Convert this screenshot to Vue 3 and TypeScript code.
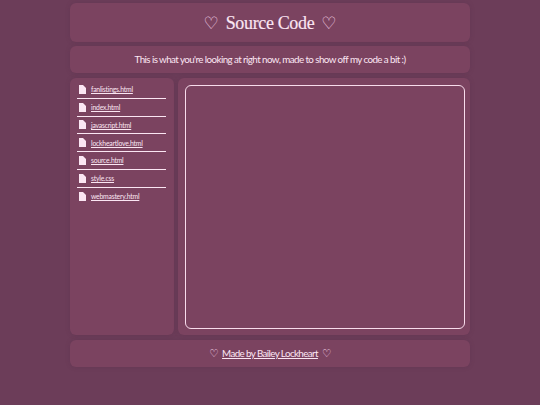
<script setup lang="ts">
const files: string[] = [
  'fanlistings.html',
  'index.html',
  'javascript.html',
  'lockheartlove.html',
  'source.html',
  'style.css',
  'webmastery.html',
]
</script>

<template>
  <div class="page">
    <header class="panel head">
      <span class="heart big">♡</span>
      <h1>Source Code</h1>
      <span class="heart big">♡</span>
    </header>
    <p class="panel sub">This is what you're looking at right now, made to show off my code a bit :)</p>
    <div class="cols">
      <aside class="panel side">
        <ul>
          <li v-for="f in files" :key="f">
            <svg width="7" height="9" viewBox="0 0 7 9"><path d="M0 0H4L7 3V9H0Z" fill="#fbe6f3" /></svg>
            <a href="#">{{ f }}</a>
          </li>
        </ul>
      </aside>
      <main class="panel content">
        <div class="code"></div>
      </main>
    </div>
    <footer class="panel foot">
      <span class="heart">♡</span>
      <a href="#">Made by Bailey Lockheart</a>
      <span class="heart">♡</span>
    </footer>
  </div>
</template>

<style>
html, body { margin: 0; background: #6c3d59; }
</style>

<style scoped>
.page {
  width: 400px;
  height: 405px;
  margin: 0 auto;
  padding-top: 3px;
  box-sizing: border-box;
  display: flex;
  flex-direction: column;
  gap: 4px;
  color: #fbe6f3;
  font-family: Lato, sans-serif;
}
.panel {
  background: #7b4360;
  border-radius: 6px;
  box-shadow: 0 0 4px rgba(90, 45, 75, 0.35);
}
.head {
  height: 39px;
  box-sizing: border-box;
  padding-top: 1px;
  display: flex;
  align-items: center;
  justify-content: center;
  gap: 7px;
}
h1 {
  margin: 0;
  font: 400 18px "Liberation Serif", serif;
  letter-spacing: -0.35px;
  -webkit-text-stroke: 0.15px #fbe6f3;
}
.heart {
  font-family: "DejaVu Sans", sans-serif;
  font-size: 10.5px;
  color: #f3d3e6;
}
.big { font-size: 17px; }
.sub {
  margin: 0;
  height: 27px;
  line-height: 26px;
  text-align: center;
  font-size: 9.8px;
  letter-spacing: -0.58px;
}
.cols {
  height: 257px;
  margin-top: 1px;
  display: grid;
  grid-template-columns: 104px 292px;
  gap: 4px;
}
.side { padding: 3px 8px 0 7px; }
ul { list-style: none; margin: 0; padding: 0; }
li {
  height: 17.75px;
  box-sizing: border-box;
  padding-left: 2px;
  display: flex;
  align-items: center;
  gap: 5px;
  border-bottom: 1px solid #fbe6f3;
}
li:last-child { border-bottom: 0; }
a { color: #fbe6f3; text-decoration: underline; }
li a { font-size: 6.8px; letter-spacing: -0.2px; }
.content { padding: 7px 5px 6px 7px; }
.code {
  height: 100%;
  box-sizing: border-box;
  border: 1.5px solid #f8dcec;
  border-radius: 6px;
}
.foot {
  height: 27px;
  box-sizing: border-box;
  padding-bottom: 2px;
  margin-top: 1px;
  display: flex;
  align-items: center;
  justify-content: center;
  gap: 4px;
  font-size: 9.8px;
  letter-spacing: -0.6px;
}
</style>
